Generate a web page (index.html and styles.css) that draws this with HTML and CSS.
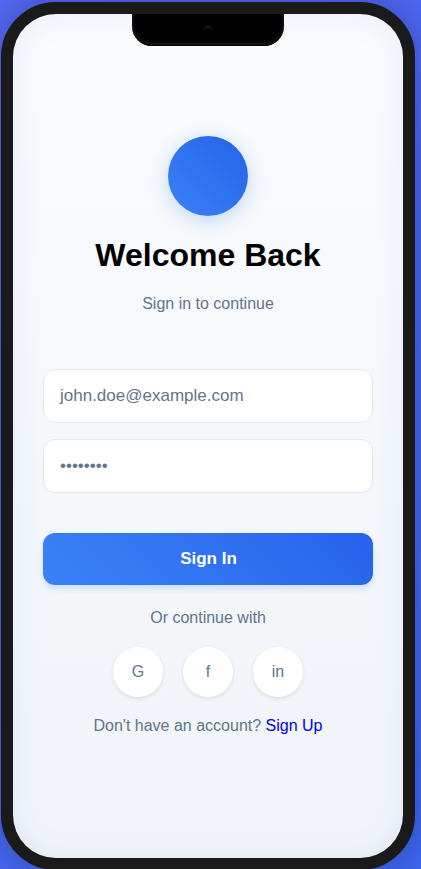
FILE: index.html
```html
<!DOCTYPE html>
<html lang="en">
<head>
<meta charset="utf-8">
<title>Welcome Back</title>
<link rel="stylesheet" href="styles.css">
</head>
<body>
<main class="phone">
  <div class="notch"><span class="camera"></span></div>
  <div class="screen">
    <div class="logo"></div>
    <h1 class="title">Welcome Back</h1>
    <p class="subtitle">Sign in to continue</p>
    <div class="fields">
      <div class="field">john.doe@example.com</div>
      <div class="field">••••••••</div>
    </div>
    <button class="submit">Sign In</button>
    <p class="divider">Or continue with</p>
    <div class="social">
      <span class="social-item">G</span>
      <span class="social-item">f</span>
      <span class="social-item">in</span>
    </div>
    <p class="signup">Don't have an account? <a href="#">Sign Up</a></p>
  </div>
</main>
</body>
</html>
```
FILE: styles.css
```css
* { box-sizing: border-box; margin: 0; }
html { height: 100%; overflow: hidden; }
body {
  height: 869px;
  overflow: hidden;
  padding: 2px 0 0 1px;
  background: linear-gradient(135deg, #5467f2, #3c65ec);
  font: 16px/18px "Liberation Sans", Arial, sans-serif;
  color: #64748b;
}
.phone {
  position: relative;
  width: 414px;
  height: 868px;
  border: 12px solid #1a1a1a;
  border-radius: 55px;
  background: #1a1a1a;
  box-shadow: 0 0 30px rgba(0, 0, 0, .25);
}
.notch {
  position: absolute;
  top: 0;
  left: 119px;
  width: 152px;
  height: 32px;
  padding-top: 12px;
  border-radius: 0 0 20px 20px;
  background: #000;
  box-shadow: inset 0 -1px 1px #000, inset 0 -2px 4px rgba(255, 255, 255, .16);
}
.camera {
  display: block;
  width: 8px;
  height: 8px;
  margin: 0 auto;
  border-radius: 50%;
  background: #000;
  box-shadow: inset 0 1px 1px rgba(255, 255, 255, .2);
}
.screen {
  display: flex;
  flex-direction: column;
  align-items: center;
  height: 844px;
  padding: 122px 30px 0;
  border-radius: 43px;
  background: linear-gradient(#fafbfd, #f4f8fb 50%, #f0f4f8);
  box-shadow: inset 0 0 30px rgba(99, 102, 241, .1);
}
.logo {
  width: 80px;
  height: 80px;
  border-radius: 50%;
  background: linear-gradient(45deg, #3b82f6, #2563eb);
  box-shadow: 0 4px 20px rgba(59, 130, 246, .3);
}
.title {
  margin-top: 21px;
  font-size: 32px;
  line-height: 37px;
  color: #000;
}
.subtitle { margin-top: 21px; }
.fields {
  display: grid;
  gap: 16px;
  width: 100%;
  margin-top: 56px;
}
.field {
  height: 54px;
  padding: 16px;
  border: 1px solid #e2e8f0;
  border-radius: 12px;
  background: #fff;
  line-height: 20px;
  font-size: 17px;
}
.submit {
  width: 100%;
  height: 52px;
  margin-top: 40px;
  padding: 0 0 0 1px;
  border: 0;
  border-radius: 12px;
  background: linear-gradient(45deg, #3b82f6, #2563eb);
  box-shadow: 0 4px 6px rgba(59, 130, 246, .2);
  color: #fff;
  font: bold 17px/20px "Liberation Sans", Arial, sans-serif;
}
.divider { margin-top: 24px; }
.social {
  display: flex;
  gap: 20px;
  margin-top: 20px;
}
.social-item {
  display: grid;
  place-items: center;
  width: 50px;
  height: 50px;
  border-radius: 50%;
  background: #fff;
  box-shadow: 0 2px 4px rgba(0, 0, 0, .1);
}
.signup { margin-top: 20px; }
.signup a { color: #00e; text-decoration: none; }
```
